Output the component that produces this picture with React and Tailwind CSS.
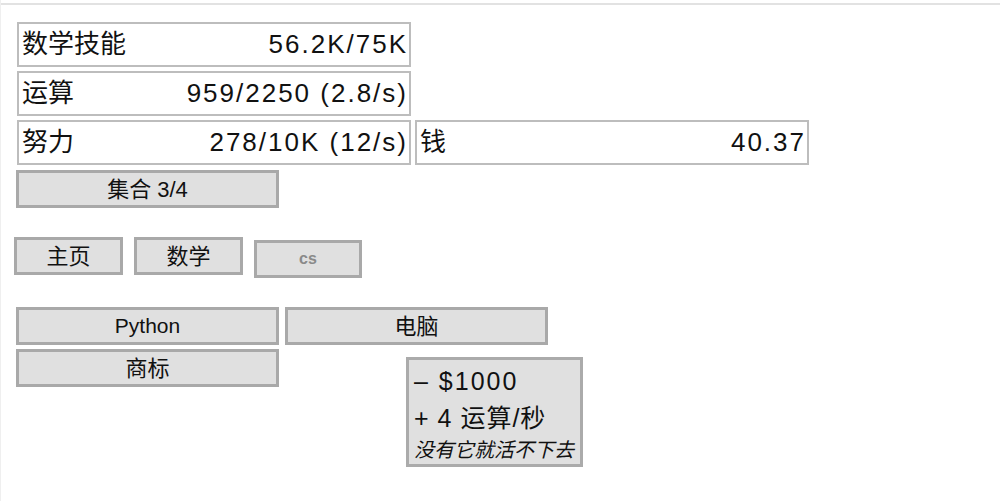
const font = { fontFamily: '"Liberation Sans", "Noto Sans CJK SC", sans-serif' }

function Stat({ label, value }) {
  return (
    <div className="flex h-[45px] w-[394px] items-center justify-between border-2 border-[#bdbdbd] px-[3px] text-[26px] text-[#111]">
      <span>{label}</span>
      <span className="tracking-[2px] -mr-[2px]">{value}</span>
    </div>
  )
}

function Btn({ children, className = '' }) {
  return (
    <button className={`flex h-[38px] items-center justify-center border-[3px] border-[#a9a9a9] bg-[#e0e0e0] text-[#111] ${className}`}>
      {children}
    </button>
  )
}

export default function App() {
  return (
    <div className="relative min-h-[501px] w-[1000px] border-l border-[#efefef] bg-white" style={font}>
      <div className="pt-[3px]">
        <div className="h-[2px] bg-[#e2e2e2]" />
      </div>

      <div className="flex flex-col gap-[4px] pl-[16px] pt-[17px]">
        <Stat label="数学技能" value="56.2K/75K" />
        <Stat label="运算" value="959/2250 (2.8/s)" />
        <div className="flex gap-[4px]">
          <Stat label="努力" value="278/10K (12/s)" />
          <Stat label="钱" value="40.37" />
        </div>
      </div>

      <div className="pl-[15px] pt-[5px]">
        <Btn className="w-[263px] text-[22px]">集合 3/4</Btn>
      </div>

      {/* tabs */}
      <div className="flex items-start gap-[11px] pl-[13px] pt-[29px]">
        <Btn className="w-[109px] text-[22px]">主页</Btn>
        <Btn className="w-[109px] text-[22px]">数学</Btn>
        <Btn className="mt-[3px] w-[108px] text-[16px] font-bold !text-[#8a8a8a]">cs</Btn>
      </div>

      <div className="flex flex-col gap-[4px] pl-[15px] pt-[29px]">
        <div className="flex gap-[6px]">
          <Btn className="w-[263px] text-[21px]">Python</Btn>
          <Btn className="w-[263px] text-[22px]">电脑</Btn>
        </div>
        <Btn className="w-[263px] text-[22px]">商标</Btn>
      </div>

      {/* tooltip */}
      <div className="absolute left-[405px] top-[357px] flex h-[110px] w-[177px] flex-col border-[3px] border-[#ababab] bg-[#e0e0e0] px-[5px] pt-[3px] text-[#111]">
        <div className="text-[25px] leading-[36px] tracking-[2px]">– $1000</div>
        <div className="text-[25px] leading-[38px] tracking-[1px]">+ 4 运算/秒</div>
        <div className="text-[20px] italic leading-[26px]">没有它就活不下去</div>
      </div>
    </div>
  )
}
